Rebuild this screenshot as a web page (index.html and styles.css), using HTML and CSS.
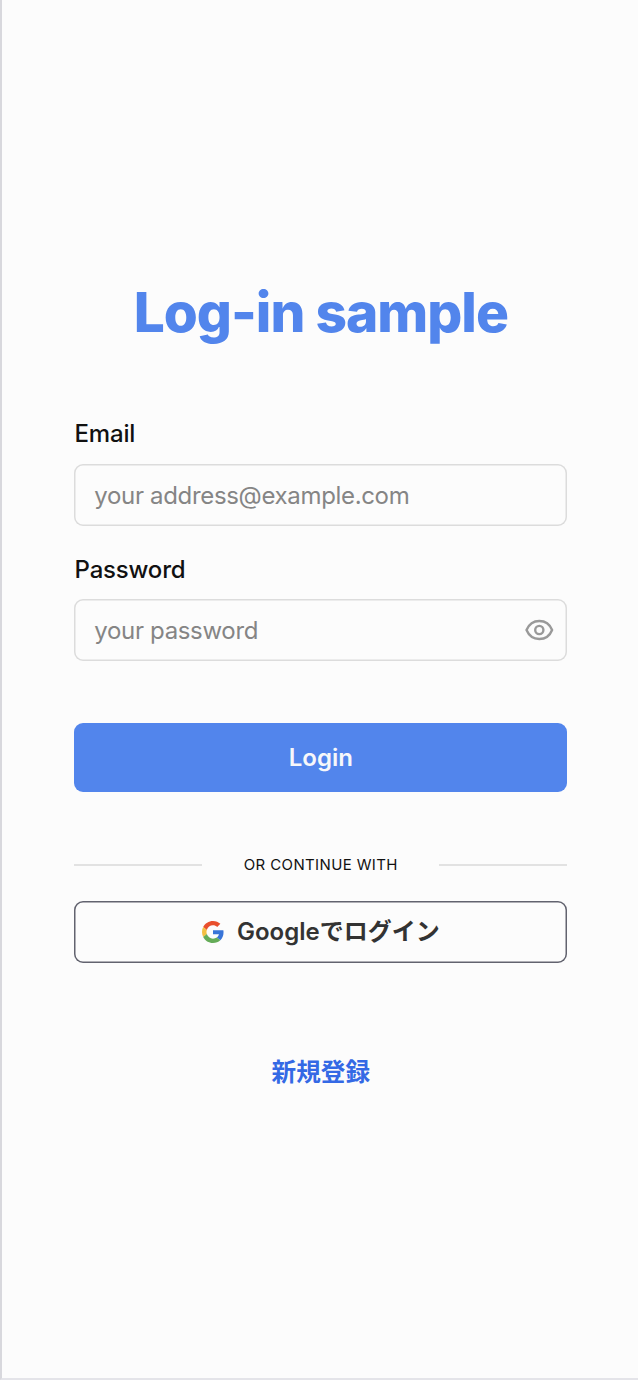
FILE: index.html
```html
<!DOCTYPE html>
<html lang="ja">
<head>
<meta charset="utf-8">
<title>Log-in sample</title>
<link rel="stylesheet" href="styles.css">
</head>
<body>
<main class="page">
  <h1 class="title">Log-in sample</h1>
  <form class="form">
    <label class="label" for="email">Email</label>
    <input class="input input-email" id="email" type="email" placeholder="your address@example.com">
    <label class="label label-password" for="password">Password</label>
    <div class="password">
      <input class="input" id="password" type="password" placeholder="your password">
      <svg class="eye" viewBox="0 0 32 24" fill="none" stroke="#999" stroke-width="2.4" stroke-linejoin="round">
        <path d="M3.500 12C6 6.200 10.500 3 16.300 3s10.500 3.200 12.800 9c-2.300 5.800-7 9-12.800 9S6 17.800 3.500 12Z"/>
        <circle cx="16.300" cy="12" r="4.100"/>
      </svg>
    </div>
    <button class="login" type="button">Login</button>
  </form>
  <div class="divider"><span class="line"></span><span class="divider-text">OR CONTINUE WITH</span><span class="line"></span></div>
  <button class="google" type="button">
    <svg class="logo" viewBox="0 0 48 48">
      <path fill="#E94F2D" d="M24 9.500c3.540 0 6.710 1.220 9.210 3.600l6.850-6.850C35.900 2.380 30.470 0 24 0 14.620 0 6.510 5.380 2.560 13.220l7.980 6.190C12.430 13.720 17.740 9.500 24 9.500z"/>
      <path fill="#3874D8" d="M46.980 24.550c0-1.570-.15-3.090-.38-4.550H24v9.020h12.940c-.58 2.960-2.260 5.480-4.780 7.180l7.730 6c4.510-4.180 7.090-10.360 7.090-17.650z"/>
      <path fill="#F4BF42" d="M10.530 28.590c-.48-1.450-.76-2.990-.76-4.590s.27-3.140.76-4.590l-7.980-6.190C.92 16.460 0 20.120 0 24c0 3.880.92 7.540 2.560 10.780l7.970-6.190z"/>
      <path fill="#65AC58" d="M24 48c6.480 0 11.930-2.130 15.890-5.810l-7.730-6c-2.150 1.450-4.920 2.300-8.160 2.300-6.260 0-11.570-4.220-13.470-9.910l-7.980 6.190C6.510 42.620 14.620 48 24 48z"/>
    </svg>
    <span class="google-text">Google<span class="kana">でログイン</span></span>
  </button>
  <a class="signup">新規登録</a>
</main>
</body>
</html>
```
FILE: styles.css
```css
* { box-sizing: border-box; }
body { margin: 0; background: #fcfcfc; font-family: Inter, "Noto Sans CJK JP", sans-serif; }
.page {
  height: 1380px;
  padding: 276px 70.700px 0 72.300px;
  border-left: 2px solid #d8d8dd;
  border-bottom: 2px solid #e4e4e9;
  display: flex;
  flex-direction: column;
}
.title { margin: 0; height: 72px; line-height: 72px; font-size: 55px; font-weight: 800; letter-spacing: -1px; color: #5285ec; text-align: center; white-space: nowrap; }
.form { display: flex; flex-direction: column; margin-top: 68px; }
.label { height: 36px; line-height: 36px; margin-bottom: 11.500px; padding-left: .3px; font-size: 24px; font-weight: 500; letter-spacing: -.2px; color: #111; }
.label-password { margin-top: 26px; }
.input { display: block; width: 100%; height: 62px; border: 0; box-shadow: inset 0 0 0 1.500px #dcdcdc; border-radius: 9px; padding: 0 20px; background: #fcfcfc; font: 400 24px Inter, sans-serif; letter-spacing: -.33px; outline: none; }
.input-email { padding-top: 2px; }
.input::placeholder { color: #858585; opacity: 1; }
.password { position: relative; height: 62px; }
.eye { position: absolute; right: 12px; top: 19px; width: 32px; height: 24px; }
.login { margin-top: 62px; height: 69px; padding: 0; border: 0; border-radius: 9px; background: #5285ec; color: #f7f7fa; font: 600 24px Inter, sans-serif; }
.divider { display: flex; align-items: center; justify-content: space-between; height: 24px; margin-top: 61px; }
.line { width: 128px; height: 2px; background: #e2e2e2; }
.divider-text { margin-top: -2px; font-size: 15px; letter-spacing: .37px; color: #111; white-space: nowrap; }
.google { display: flex; align-items: center; justify-content: center; gap: 13px; height: 62px; margin-top: 24px; padding: 0; border: 0; box-shadow: inset 0 0 0 1.500px #62636f; border-radius: 9px; background: #fcfcfc; color: #333; font: 600 24px Inter, "Noto Sans CJK JP", sans-serif; white-space: nowrap; }
.google-text { line-height: 36px; margin-top: -1px; }
.kana { font-weight: 700; }
.logo { width: 22px; height: 22px; }
.signup { align-self: center; margin-top: 91px; line-height: 36px; font-size: 24.600px; font-weight: 700; color: #3469e5; }
```
